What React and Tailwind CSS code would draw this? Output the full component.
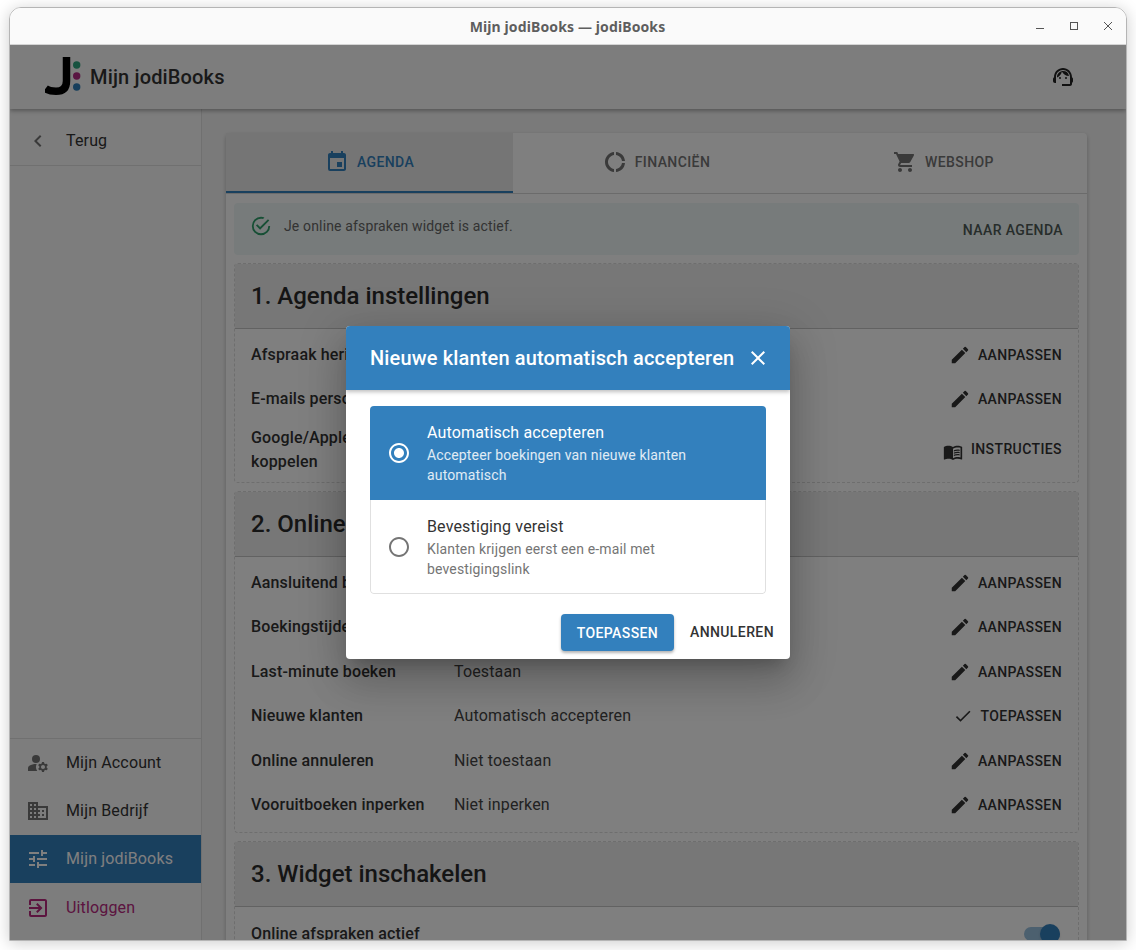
import React from "react";
import {
  MdChevronLeft, MdManageAccounts, MdDomain, MdTune, MdExitToApp, MdEvent, MdDonutLarge,
  MdShoppingCart, MdEdit, MdCheck, MdMenuBook, MdOutlineSupportAgent, MdClose,
  MdRadioButtonChecked, MdRadioButtonUnchecked,
} from "react-icons/md";

function Logo() {
  return (
    <svg width="38" height="40" viewBox="0 0 38 40" className="shrink-0">
      <path d="M21.5 0 V24 Q21.5 34.3 11 34.3 Q4 34.3 0.5 31.5" fill="none" stroke="#000" strokeWidth="7.5" />
      <circle cx="31.7" cy="8" r="3.7" fill="#2fa57e" />
      <circle cx="31.7" cy="19" r="3.7" fill="#b22a85" />
      <circle cx="31.7" cy="30" r="3.7" fill="#2f7fb8" />
    </svg>
  );
}

function SuccessIcon() {
  return (
    <svg width="22" height="22" viewBox="0 0 24 24" fill="#2e9e6b" className="mb-[6px] shrink-0">
      <path d="M20,12A8,8 0 0,1 12,20A8,8 0 0,1 4,12A8,8 0 0,1 12,4C12.76,4 13.5,4.11 14.2,4.31L15.77,2.74C14.61,2.26 13.34,2 12,2A10,10 0 0,0 2,12A10,10 0 0,0 12,22A10,10 0 0,0 22,12M7.91,10.08L6.5,11.5L11,16L21,6L19.59,4.58L11,13.17L7.91,10.08Z" />
    </svg>
  );
}

function NavItem({ icon: Icon, label, active, danger }) {
  const color = active ? "text-white" : danger ? "text-[#b8287f]" : "text-[#333333]";
  const iconColor = active ? "text-white" : danger ? "text-[#b8287f]" : "text-[#757575]";
  return (
    <div className={`flex h-12 items-center pl-4 ${active ? "bg-[#3380bd]" : ""} ${danger ? "pt-[2px]" : ""}`}>
      <Icon size={24} className={`w-[24px] ${iconColor}`} />
      <span className={`ml-4 text-base tracking-[0.15px] ${color}`}>{label}</span>
    </div>
  );
}

function ActionButton({ icon: Icon, label, size = 22, lift }) {
  return (
    <div className={`flex shrink-0 items-center text-sm font-medium uppercase tracking-[0.4px] text-[#333333] ${size === 22 ? "gap-[7px]" : "gap-2"}`}>
      <Icon size={size} className={`text-[#333333] ${lift ? "mt-[3px]" : ""}`} />
      <span className={lift ? "-mt-[2px]" : ""}>{label}</span>
    </div>
  );
}

function Row({ label, value, action = "AANPASSEN", icon = MdEdit, iconSize = 22, tall }) {
  return (
    <div className={`flex items-center pl-4 pr-4 ${tall ? "h-[58px]" : "h-[44.4px]"}`}>
      <div className="w-[203px] shrink-0 pr-4 text-base font-medium leading-6 tracking-[0.15px] text-[#333333]">{label}</div>
      <div className="flex-1 text-base tracking-[0.15px] text-[#444444]">{value}</div>
      <ActionButton icon={icon} label={action} size={iconSize} lift={tall} />
    </div>
  );
}

function Section({ title, children }) {
  return (
    <section className="mx-2 mt-2 rounded border border-dashed border-[#dcdcdc]">
      <div className="flex h-[65px] items-center border-b border-[#c4c4c4] bg-[#eeeeee] pl-4 text-2xl font-medium text-[#2b2b2b]">
        {title}
      </div>
      {children}
    </section>
  );
}

function Tab({ icon: Icon, label, active }) {
  return (
    <div className={`flex h-[60px] flex-1 items-center justify-center gap-2 border-b-2 text-sm font-medium uppercase tracking-[0.4px] ${active ? "border-[#3380bd] bg-[#ebebeb] text-[#3380bd]" : "border-transparent text-[#757575]"}`}>
      <Icon size={24} />
      <span>{label}</span>
    </div>
  );
}

export default function App() {
  return (
    <div className="h-[950px] w-[1136px] overflow-hidden bg-[#ffffff] px-[9px] pt-[7px] font-['Roboto',sans-serif]">
      <div className="relative flex h-[934px] w-[1118px] flex-col overflow-hidden rounded-t-xl border border-[#b5b5b5] shadow-[0_2px_16px_rgba(0,0,0,0.2)]">
        <div className="relative flex h-[37px] shrink-0 items-center justify-center border-b border-[#d4d4d4] bg-[#fafafa] pr-[1px] pt-[1px]">
          <span className="font-['Noto_Sans',sans-serif] text-[14px] font-bold tracking-[0.12px] text-[#5e5e5e]">Mijn jodiBooks — jodiBooks</span>
          <div className="absolute right-[10px] top-0 flex h-[36px] items-center gap-[18px] text-[#555555]">
            <svg width="16" height="16" viewBox="0 0 16 16" stroke="#555" fill="none"><path d="M4 10.5H12" /></svg>
            <svg width="16" height="16" viewBox="0 0 16 16" stroke="#555" fill="none"><rect x="4.5" y="4.5" width="7" height="7" /></svg>
            <svg width="16" height="16" viewBox="0 0 16 16" stroke="#555" fill="none"><path d="M4 4L12 12M12 4L4 12" /></svg>
          </div>
        </div>

        <div className="relative min-h-0 flex-1 overflow-hidden">
          <div className="flex h-full flex-col bg-[#f5f5f5]">
            <header className="z-10 flex h-16 shrink-0 items-center justify-between bg-[#fafafa] pl-[35px] pr-[51px] shadow-[0_2px_4px_rgba(0,0,0,0.3)]">
              <div className="flex items-center">
                <Logo />
                <span className="ml-[7px] text-xl font-medium tracking-[0.15px] text-[#333333]">Mijn jodiBooks</span>
              </div>
              <MdOutlineSupportAgent size={24} className="text-[#222222]" />
            </header>

            <div className="flex min-h-0 flex-1">
              <aside className="flex w-[192px] shrink-0 flex-col border-r border-[#e0e0e0] bg-[#fafafa]">
                <div className="flex h-[57px] items-center border-b border-[#e0e0e0] pl-4 pt-2">
                  <MdChevronLeft size={24} className="w-[24px] text-[#757575]" />
                  <span className="ml-4 text-base tracking-[0.15px] text-[#333333]">Terug</span>
                </div>
                <div className="flex-1" />
                <div className="border-t border-[#e0e0e0] pb-[9px]">
                  <NavItem icon={MdManageAccounts} label="Mijn Account" />
                  <NavItem icon={MdDomain} label="Mijn Bedrijf" />
                  <NavItem icon={MdTune} label="Mijn jodiBooks" active />
                  <NavItem icon={MdExitToApp} label="Uitloggen" danger />
                </div>
              </aside>

              <main className="min-w-0 flex-1 overflow-hidden pl-6 pr-[39px] pt-6">
                <div className="rounded bg-white shadow-[0_2px_4px_rgba(0,0,0,0.25)]">
                  <div className="flex border-b border-[#d6d6d6]">
                    <Tab icon={MdEvent} label="Agenda" active />
                    <Tab icon={MdDonutLarge} label="Financiën" />
                    <Tab icon={MdShoppingCart} label="Webshop" />
                  </div>

                  <div className="mx-2 mt-[9px] flex h-[52px] items-center rounded bg-[#eef7f6] pl-4 pr-4">
                    <SuccessIcon />
                    <span className="mb-[6px] ml-[12px] flex-1 text-sm tracking-[0.15px] text-[#666666]">Je online afspraken widget is actief.</span>
                    <span className="pt-[2px] text-sm font-medium uppercase tracking-[0.4px] text-[#4f5a56]">Naar agenda</span>
                  </div>

                  <Section title="1. Agenda instellingen">
                    <div className="pb-[2.4px] pt-[3.6px]">
                      <Row label="Afspraak herinneringen" value="Aan" />
                      <Row label="E-mails personaliseren" value="Standaard" />
                      <Row label="Google/Apple agenda koppelen" value="Gekoppeld" action="INSTRUCTIES" icon={MdMenuBook} iconSize={20} tall />
                    </div>
                  </Section>

                  <Section title="2. Online boeken">
                    <div className="pb-[5px] pt-[4px]">
                      <Row label="Aansluitend boeken" value="Toestaan" />
                      <Row label="Boekingstijden" value="Standaard" />
                      <Row label="Last-minute boeken" value="Toestaan" />
                      <Row label="Nieuwe klanten" value="Automatisch accepteren" action="TOEPASSEN" icon={MdCheck} iconSize={20} />
                      <Row label="Online annuleren" value="Niet toestaan" />
                      <Row label="Vooruitboeken inperken" value="Niet inperken" />
                    </div>
                  </Section>

                  <Section title="3. Widget inschakelen">
                    <div className="flex h-[52px] items-start pl-4 pr-4 pt-[15px]">
                      <div className="flex-1 text-base font-medium tracking-[0.15px] text-[#333333]">Online afspraken actief</div>
                      <div className="relative mr-[2px] mt-[5px] h-[14px] w-[36px] rounded-full bg-[#98c0de]">
                        <div className="absolute -top-[3px] right-0 h-5 w-5 rounded-full bg-[#3380bd] shadow" />
                      </div>
                    </div>
                  </Section>
                </div>
              </main>
            </div>
          </div>

          <div className="absolute inset-0 z-20 flex items-center justify-center bg-black/50">
            <div className="w-[444px] overflow-hidden rounded bg-white shadow-[0_11px_15px_-7px_rgba(0,0,0,0.2),0_24px_38px_3px_rgba(0,0,0,0.14),0_9px_46px_8px_rgba(0,0,0,0.12)]">
              <div className="flex h-16 items-center justify-between bg-[#3380bd] pl-6 pr-[20px] text-white shadow-[0_2px_4px_rgba(0,0,0,0.25)]">
                <span className="text-xl font-medium tracking-[0.15px]">Nieuwe klanten automatisch accepteren</span>
                <MdClose size={24} />
              </div>
              <div className="px-6 pt-4">
                <div className="overflow-hidden rounded">
                  <div className="flex h-[94px] items-center bg-[#3380bd] pb-[1px] pl-[17px] pr-4 text-white">
                    <MdRadioButtonChecked size={24} className="shrink-0" />
                    <div className="ml-4">
                      <div className="text-base leading-6 tracking-[0.15px]">Automatisch accepteren</div>
                      <div className="text-sm leading-5 tracking-[0.15px] text-white/85">Accepteer boekingen van nieuwe klanten automatisch</div>
                    </div>
                  </div>
                  <div className="flex h-[94px] items-center rounded-b border-x border-b border-[#e0e0e0] pl-4 pr-4">
                    <MdRadioButtonUnchecked size={24} className="shrink-0 text-[#757575]" />
                    <div className="ml-4">
                      <div className="text-base leading-6 tracking-[0.15px] text-[#333333]">Bevestiging vereist</div>
                      <div className="text-sm leading-5 tracking-[0.15px] text-[#757575]">Klanten krijgen eerst een e-mail met bevestigingslink</div>
                    </div>
                  </div>
                </div>
              </div>
              <div className="flex h-[65px] items-start justify-end pr-4 pt-5">
                <div className="flex h-[37px] w-[113px] items-center justify-center rounded bg-[#3380bd] text-sm font-medium uppercase tracking-[0.4px] text-white shadow-[0_2px_3px_rgba(0,0,0,0.3)]">Toepassen</div>
                <div className="ml-4 flex h-[35px] items-center text-sm font-medium uppercase tracking-[0.4px] text-[#333333]">Annuleren</div>
              </div>
            </div>
          </div>
        </div>
      </div>
    </div>
  );
}
